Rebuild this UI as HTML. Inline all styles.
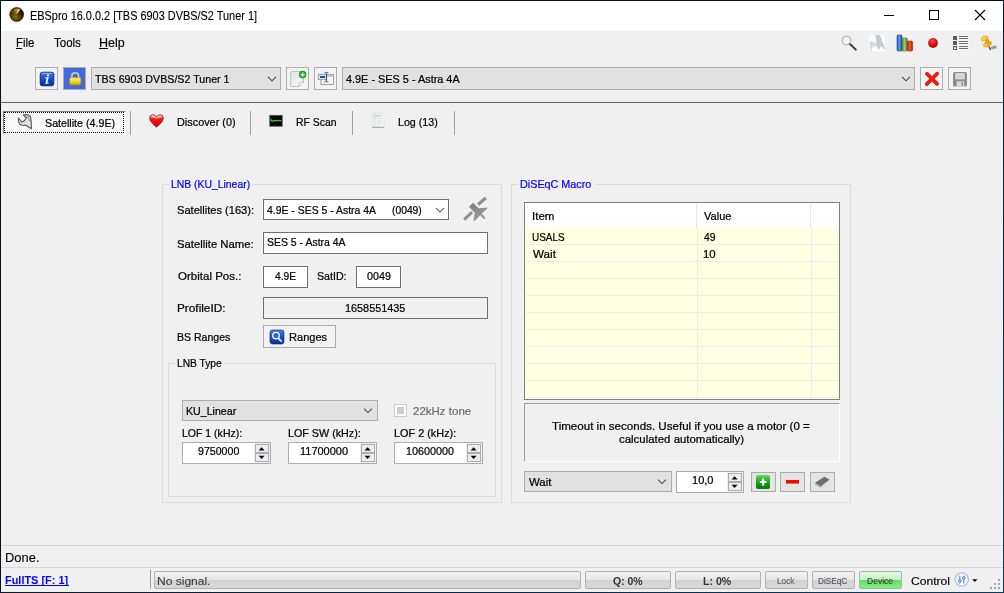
<!DOCTYPE html>
<html><head><meta charset="utf-8"><title>EBSpro</title>
<style>
html,body{margin:0;padding:0}
body{width:1004px;height:593px;overflow:hidden;background:#f0f0f0;position:relative;font-family:"Liberation Sans",sans-serif;font-size:12px;color:#000}
.a{position:absolute;box-sizing:border-box}
.t{position:absolute;white-space:pre;color:#000;transform-origin:0 0;-webkit-text-stroke:0.24px currentColor}
.btn{border:1px solid #adadad;background:#e1e1e1}
.cmb{border:1px solid #adadad;background:#e1e1e1}
.inp{border:1px solid #707070;background:#fff}
.grp{border:1px solid #dcdcdc}
.cap{background:#f0f0f0}
.sep{width:1px;background:#a0a0a0}
.bar{border:1px solid #b2b2b2;border-radius:2px;background:linear-gradient(#f2f2f2 0%,#e6e6e6 48%,#d2d2d2 52%,#d8d8d8 100%)}
.spb{background:#ededed;border:1px solid #adadad}
svg{position:absolute;overflow:visible}
</style></head><body>
<!-- window frame -->
<div class="a" style="left:0;top:0;width:1004px;height:1px;background:#030c1a"></div>
<div class="a" style="left:0;top:0;width:1px;height:593px;background:#04101e"></div>
<div class="a" style="left:1003px;top:0;width:1px;height:593px;background:linear-gradient(#0a1828,#0a4060)"></div>
<div class="a" style="left:0;top:592px;width:1004px;height:1px;background:linear-gradient(90deg,#0c1c2c,#00284e 40%,#064060)"></div>
<div class="a" style="left:1px;top:1px;width:1002px;height:30px;background:#fff"></div>

<!-- caption buttons -->
<svg style="left:880px;top:5px" width="120" height="20" viewBox="0 0 120 20">
<path d="M4 10.5H14" stroke="#000" stroke-width="1" fill="none"/>
<rect x="49.5" y="5.5" width="9" height="9" stroke="#000" stroke-width="1" fill="none"/>
<path d="M95 5L105 15M105 5L95 15" stroke="#000" stroke-width="1.1" fill="none"/>
</svg>
<div class="a" style="left:16px;top:48px;width:6px;height:1px;background:#000"></div>
<div class="a" style="left:99px;top:48px;width:9px;height:1px;background:#000"></div>
<!-- toolbar -->
<div class="a btn" style="left:35px;top:67px;width:23px;height:23px;background:#f3f3f3"></div>
<div class="a btn" style="left:63px;top:67px;width:23px;height:23px;background:#4169e1"></div>
<div class="a cmb" style="left:91px;top:67px;width:190px;height:23px"></div>
<div class="a btn" style="left:286px;top:67px;width:23px;height:23px;background:#f3f3f3"></div>
<div class="a btn" style="left:314px;top:67px;width:23px;height:23px;background:#f3f3f3"></div>
<div class="a cmb" style="left:342px;top:67px;width:573px;height:23px"></div>
<div class="a btn" style="left:920px;top:67px;width:23px;height:23px;background:#f3f3f3"></div>
<div class="a btn" style="left:948px;top:67px;width:23px;height:23px;background:#f3f3f3"></div>
<!-- toolbar bottom line -->
<div class="a" style="left:1px;top:102px;width:1002px;height:1px;background:#646464"></div>
<!-- tabs -->
<div class="a" style="left:3px;top:111px;width:123px;height:23px;background:#f8f8f8;border-top:1px solid #808080;border-left:1px solid #808080;border-right:1px solid #fff;border-bottom:1px solid #fff"></div>
<div class="a" style="left:4px;top:112px;width:120px;height:21px;border:1px dotted #000"></div>
<div class="a sep" style="left:130px;top:111px;height:24px"></div>
<div class="a sep" style="left:250px;top:111px;height:24px"></div>
<div class="a sep" style="left:352px;top:111px;height:24px"></div>
<div class="a sep" style="left:454px;top:111px;height:24px"></div>
<!-- LNB group -->
<div class="a grp" style="left:162px;top:184px;width:340px;height:319px"></div>
<div class="a cap" style="left:169px;top:178px;width:83px;height:14px"></div>
<div class="a inp" style="left:263px;top:199px;width:186px;height:21px"></div>
<div class="a inp" style="left:263px;top:232px;width:225px;height:22px"></div>
<div class="a inp" style="left:263px;top:266px;width:45px;height:22px"></div>
<div class="a inp" style="left:356px;top:266px;width:45px;height:22px"></div>
<div class="a inp" style="left:263px;top:297px;width:225px;height:22px;background:#f0f0f0"></div>
<div class="a btn" style="left:263px;top:325px;width:73px;height:23px;background:#f3f3f3"></div>
<div class="a grp" style="left:168px;top:363px;width:328px;height:134px"></div>
<div class="a cap" style="left:175px;top:357px;width:49px;height:14px"></div>
<div class="a cmb" style="left:182px;top:400px;width:196px;height:21px"></div>
<div class="a" style="left:394px;top:404px;width:13px;height:13px;border:1px solid #cccccc;background:#fff"></div>
<div class="a" style="left:397px;top:407px;width:7px;height:7px;background:#cccccc"></div>
<!-- spins -->
<div class="a inp" style="left:182px;top:442px;width:89px;height:22px;border-color:#abadb3"></div>
<div class="a inp" style="left:288px;top:442px;width:89px;height:22px;border-color:#abadb3"></div>
<div class="a inp" style="left:394px;top:442px;width:89px;height:22px;border-color:#abadb3"></div>
<!-- DiSEqC group -->
<div class="a grp" style="left:511px;top:184px;width:340px;height:319px"></div>
<div class="a cap" style="left:518px;top:178px;width:77px;height:14px"></div>
<!-- listview -->
<div class="a" style="left:524px;top:202px;width:316px;height:198px;background:#ffffe1;border:1px solid #7c818c"></div>
<div class="a" style="left:526px;top:204px;width:312px;height:24px;background:#fff"></div>
<div class="a" style="left:526px;top:244px;width:312px;height:1px;background:#ececf0"></div>
<div class="a" style="left:526px;top:261px;width:312px;height:1px;background:#ececf0"></div>
<div class="a" style="left:526px;top:278px;width:312px;height:1px;background:#ececf0"></div>
<div class="a" style="left:526px;top:295px;width:312px;height:1px;background:#ececf0"></div>
<div class="a" style="left:526px;top:312px;width:312px;height:1px;background:#ececf0"></div>
<div class="a" style="left:526px;top:329px;width:312px;height:1px;background:#ececf0"></div>
<div class="a" style="left:526px;top:346px;width:312px;height:1px;background:#ececf0"></div>
<div class="a" style="left:526px;top:363px;width:312px;height:1px;background:#ececf0"></div>
<div class="a" style="left:526px;top:380px;width:312px;height:1px;background:#ececf0"></div>
<div class="a" style="left:526px;top:397px;width:312px;height:1px;background:#ececf0"></div>
<div class="a" style="left:697px;top:228px;width:1px;height:171px;background:#ececf0"></div>
<div class="a" style="left:811px;top:228px;width:1px;height:171px;background:#ececf0"></div>
<div class="a" style="left:696px;top:204px;width:1px;height:24px;background:#e5e5e5"></div>
<div class="a" style="left:810px;top:204px;width:1px;height:24px;background:#e5e5e5"></div>
<!-- panel -->
<div class="a" style="left:524px;top:403px;width:316px;height:59px;border-top:1px solid #a0a0a0;border-left:1px solid #a0a0a0;border-right:1px solid #fff;border-bottom:1px solid #fff"></div>
<div class="a cmb" style="left:524px;top:471px;width:148px;height:21px"></div>
<div class="a inp" style="left:676px;top:471px;width:68px;height:22px;border-color:#abadb3"></div>
<div class="a btn" style="left:751px;top:472px;width:25px;height:20px;background:#e4e4e4"></div>
<div class="a btn" style="left:780px;top:472px;width:25px;height:20px;background:#e4e4e4"></div>
<div class="a btn" style="left:810px;top:472px;width:25px;height:20px;background:#e4e4e4"></div>
<div class="a" style="left:254px;top:443px;width:16px;height:20px;background:#f0f0f0"></div>
<div class="a" style="left:360px;top:443px;width:16px;height:20px;background:#f0f0f0"></div>
<div class="a" style="left:466px;top:443px;width:16px;height:20px;background:#f0f0f0"></div>
<div class="a" style="left:727px;top:472px;width:16px;height:20px;background:#f0f0f0"></div>
<div class="a spb" style="left:255px;top:444px;width:14px;height:9px"></div>
<div class="a spb" style="left:255px;top:453px;width:14px;height:9px"></div>
<div class="a spb" style="left:361px;top:444px;width:14px;height:9px"></div>
<div class="a spb" style="left:361px;top:453px;width:14px;height:9px"></div>
<div class="a spb" style="left:467px;top:444px;width:14px;height:9px"></div>
<div class="a spb" style="left:467px;top:453px;width:14px;height:9px"></div>
<div class="a spb" style="left:728px;top:473px;width:14px;height:9px"></div>
<div class="a spb" style="left:728px;top:482px;width:14px;height:9px"></div>
<!-- status -->
<div class="a" style="left:5px;top:585px;width:64px;height:1px;background:#0000ff"></div>
<div class="a" style="left:1px;top:545px;width:1002px;height:1px;background:#d7d7d7"></div>
<div class="a" style="left:1px;top:567px;width:1002px;height:1px;background:#d7d7d7"></div>
<div class="a sep" style="left:150px;top:570px;height:19px"></div>
<div class="a bar" style="left:154px;top:571px;width:427px;height:18px"></div>
<div class="a bar" style="left:585px;top:571px;width:86px;height:18px"></div>
<div class="a bar" style="left:675px;top:571px;width:86px;height:18px"></div>
<div class="a bar" style="left:765px;top:571px;width:43px;height:18px"></div>
<div class="a bar" style="left:812px;top:571px;width:43px;height:18px"></div>
<div class="a bar" style="left:859px;top:571px;width:43px;height:18px;background:linear-gradient(#e2fbe2 0%,#c0f4c0 50%,#62dc62 53%,#86ee86 100%);border-color:#aab4aa"></div>
<svg style="left:0;top:0" width="1004" height="593" viewBox="0 0 1004 593">
<defs>
<radialGradient id="gApp" cx="0.45" cy="0.68" r="0.62"><stop offset="0" stop-color="#8c6608"/><stop offset="0.55" stop-color="#624606"/><stop offset="1" stop-color="#221804"/></radialGradient>
<linearGradient id="gBlue" x1="0" y1="0" x2="0" y2="1"><stop offset="0" stop-color="#4080e0"/><stop offset="0.5" stop-color="#1a50c0"/><stop offset="1" stop-color="#0a2c98"/></linearGradient>
<linearGradient id="gGreen" x1="0" y1="0" x2="0" y2="1"><stop offset="0" stop-color="#6ad86a"/><stop offset="0.5" stop-color="#18a418"/><stop offset="1" stop-color="#067806"/></linearGradient>
<linearGradient id="gYel" x1="0" y1="0" x2="0" y2="1"><stop offset="0" stop-color="#fff080"/><stop offset="0.6" stop-color="#f0d020"/><stop offset="1" stop-color="#c8a010"/></linearGradient>
<linearGradient id="gRed" x1="0" y1="0" x2="0" y2="1"><stop offset="0" stop-color="#ff5030"/><stop offset="1" stop-color="#c80808"/></linearGradient>
<radialGradient id="gDot" cx="0.45" cy="0.3" r="0.7"><stop offset="0" stop-color="#f05050"/><stop offset="0.6" stop-color="#d81010"/><stop offset="1" stop-color="#b00808"/></radialGradient>
<linearGradient id="gHeart" x1="0" y1="0" x2="0" y2="1"><stop offset="0" stop-color="#ffb0b0"/><stop offset="0.35" stop-color="#f01818"/><stop offset="1" stop-color="#e00000"/></linearGradient>
<linearGradient id="gBarB" x1="0" y1="0" x2="1" y2="0"><stop offset="0" stop-color="#2a5cc0"/><stop offset="0.5" stop-color="#5a9ae8"/><stop offset="1" stop-color="#1a48a8"/></linearGradient>
<linearGradient id="gBarG" x1="0" y1="0" x2="1" y2="0"><stop offset="0" stop-color="#5a8a28"/><stop offset="0.5" stop-color="#a8cc70"/><stop offset="1" stop-color="#4a7a20"/></linearGradient>
<linearGradient id="gBarR" x1="0" y1="0" x2="1" y2="0"><stop offset="0" stop-color="#c02808"/><stop offset="0.5" stop-color="#f06030"/><stop offset="1" stop-color="#a81800"/></linearGradient>
<linearGradient id="gPage" x1="0" y1="0" x2="1" y2="1"><stop offset="0" stop-color="#e2e2e2"/><stop offset="1" stop-color="#fafafa"/></linearGradient>
<linearGradient id="gSat" x1="0" y1="0" x2="1" y2="1"><stop offset="0" stop-color="#7c7c7c"/><stop offset="1" stop-color="#a4a4a4"/></linearGradient>
<filter id="fBlur" x="-50%" y="-50%" width="200%" height="200%"><feGaussianBlur stdDeviation="0.55"/></filter>
</defs>
<!-- app icon -->
<circle cx="16.7" cy="14.5" r="7.4" fill="#505050" opacity="0.8"/>
<circle cx="16.7" cy="14.5" r="6.5" fill="url(#gApp)"/>
<path d="M16.7 14.5L18.92 20.61A6.5 6.5 0 0 0 23.10 15.63Z" fill="#140e02" opacity="0.2"/>
<path d="M16.7 14.5L23.10 15.63A6.5 6.5 0 0 0 20.52 9.24Z" fill="#140e02" opacity="0.5"/>
<path d="M16.7 14.5L20.52 9.24A6.5 6.5 0 0 0 17.38 8.04Z" fill="#ecd460" opacity="0.95"/>
<path d="M16.7 14.5L17.38 8.04A6.5 6.5 0 0 0 13.65 8.76Z" fill="#c49c2c" opacity="0.8"/>
<path d="M16.7 14.5L13.65 8.76A6.5 6.5 0 0 0 10.59 12.28Z" fill="#8c6c16" opacity="0.5"/>
<circle cx="16.7" cy="14.5" r="6.5" fill="none" stroke="#1c1404" stroke-width="1" opacity="0.75"/>
<!-- top-right small icons -->
<circle cx="846.5" cy="40.5" r="4.3" fill="#f3f3f3" stroke="#b0b0b0" stroke-width="1.1"/>
<path d="M850.2 44.2L855.8 49.6" stroke="#3a3a3a" stroke-width="2" stroke-linecap="round"/>
<rect x="869" y="35" width="16" height="16" fill="#fbfcfd"/>
<path d="M875.5 35L880 35L885 48L885 50L881 46L879 50L877 47Z" fill="#c6cccf"/>
<path d="M869.5 42L872 41L874 43L877 42L877 46L873 47L870 47Z" fill="#d2dce6"/>
<rect x="870.3" y="46" width="1.4" height="5" fill="#c8d8e0"/>
<rect x="897" y="35" width="5" height="16" rx="1" fill="url(#gBarB)" stroke="#1a3c98" stroke-width="0.6"/>
<rect x="902.2" y="38" width="5" height="13" rx="1" fill="url(#gBarG)" stroke="#487818" stroke-width="0.6"/>
<rect x="907.5" y="41" width="5" height="10" rx="1" fill="url(#gBarR)" stroke="#a01800" stroke-width="0.6"/>
<circle cx="933" cy="43" r="4.9" fill="url(#gDot)"/>
<rect x="952.5" y="35.5" width="16" height="15" fill="#f6f6f6"/>
<g fill="#5c5c5c"><rect x="953" y="36" width="4" height="4"/><rect x="953" y="41" width="4" height="4"/><rect x="953" y="46" width="4" height="4"/></g>
<rect x="954.2" y="47.2" width="1.8" height="1.8" fill="#fff"/>
<g fill="#707070"><rect x="959" y="36" width="9" height="1"/><rect x="959" y="38" width="9" height="1"/><rect x="959" y="41" width="9" height="1"/><rect x="959" y="43" width="9" height="1"/><rect x="959" y="46" width="9" height="1"/><rect x="959" y="48" width="9" height="1"/></g>
<!-- pin -->
<ellipse cx="993.8" cy="47.2" rx="3.1" ry="1.5" fill="#7c7c7c" opacity="0.8" filter="url(#fBlur)" transform="rotate(-12 993.8 47.2)"/>
<path d="M989 46.4L990.6 49.9" stroke="#2c2c5c" stroke-width="1.2"/>
<ellipse cx="987.5" cy="44.2" rx="4.7" ry="2.5" fill="#f5a51a" transform="rotate(-24 987.5 44.2)"/>
<path d="M984.6 39.8L988.4 38.2L990 42.4L985.6 44.2Z" fill="#f09a12"/>
<ellipse cx="984.5" cy="38.3" rx="3.9" ry="2.4" fill="#f8b42a" transform="rotate(-24 984.5 38.3)"/>
<ellipse cx="983.6" cy="38.2" rx="2.2" ry="1.2" fill="#ffd45a" transform="rotate(-24 983.6 38.2)"/>
<ellipse cx="985.6" cy="45" rx="2.2" ry="1.2" fill="#fcc440" transform="rotate(-24 985.6 45)"/>
<!-- info button icon -->
<rect x="40.2" y="72.2" width="13.6" height="13.6" rx="2.2" fill="url(#gBlue)" stroke="#001468" stroke-width="0.8"/>
<path d="M41.6 73.3H52.4" stroke="#a8d4f8" stroke-width="0.8" opacity="0.9"/>
<path d="M47.2 74.6h1.9l-0.3 1.6h-1.9zM45.4 77.6l3.4-0.5l-1.5 5.6l1.5-0.2l-0.2 1.1l-3.3 0.5l1.5-5.7l-1.6 0.2z" fill="#fff"/>
<!-- lock icon -->
<path d="M71.9 78V75.6Q71.9 72.8 75.2 72.8Q78.5 72.8 78.5 75.6V78" fill="none" stroke="#8c8c8c" stroke-width="2.2"/>
<path d="M71.9 78V75.6Q71.9 72.8 75.2 72.8Q78.5 72.8 78.5 75.6V78" fill="none" stroke="#dcdcdc" stroke-width="1.1"/>
<rect x="69.6" y="77.6" width="11.2" height="7.4" rx="1.4" fill="url(#gYel)" stroke="#b89010" stroke-width="0.6"/>
<!-- combo chevrons -->
<path d="M268 76.8L272 80.8L276 76.8" fill="none" stroke="#484848" stroke-width="1.05"/>
<path d="M902 76.8L906 80.8L910 76.8" fill="none" stroke="#484848" stroke-width="1.05"/>
<path d="M436 208L440 212L444 208" fill="none" stroke="#484848" stroke-width="1.05"/>
<path d="M364 408.6L368 412.6L372 408.6" fill="none" stroke="#484848" stroke-width="1.05"/>
<path d="M658 479.6L662 483.6L666 479.6" fill="none" stroke="#484848" stroke-width="1.05"/>
<!-- new doc icon -->
<path d="M291.5 71.5H303.5V82L299 86.5H291.5Q290.7 86.5 290.7 85.5V72.5Q290.7 71.5 291.5 71.5Z" fill="url(#gPage)" stroke="#b4b4b4" stroke-width="0.8"/>
<path d="M303.5 82H300Q299 82 299 83V86.5Z" fill="#fdfdfd" stroke="#b4b4b4" stroke-width="0.7"/>
<circle cx="302.6" cy="74.6" r="3.8" fill="#14a814"/>
<path d="M300.4 74.6H304.8M302.6 72.4V76.8" stroke="#fff" stroke-width="1.4"/>
<!-- rename icon -->
<rect x="321" y="74.5" width="12.5" height="10" fill="#f4f4f4" stroke="#9a9a9a" stroke-width="0.9"/>
<rect x="321.4" y="74.9" width="11.7" height="2" fill="#c0c4d0"/>
<rect x="318.3" y="74.3" width="8.4" height="5.4" fill="#e8e8e8" stroke="#8c8c8c" stroke-width="0.8"/>
<rect x="320" y="76" width="5" height="2" fill="#1848c8"/>
<path d="M324.4 72.4Q326 72.4 326.4 73Q326.8 72.4 328.4 72.4M326.4 73V81.4M324.4 82Q326 82 326.4 81.4Q326.8 82 328.4 82" fill="none" stroke="#444" stroke-width="0.9"/>
<!-- red X -->
<path d="M927 73.8L937 83.8M937.2 73.6L926.8 84" stroke="url(#gRed)" stroke-width="3.6" stroke-linecap="round"/>
<path d="M927 73.8L937 83.8M937.2 73.6L926.8 84" stroke="#e81c10" stroke-width="3.4" stroke-linecap="round"/>
<!-- floppy -->
<rect x="953" y="72" width="14" height="14.6" rx="1.6" fill="#8c8c8c"/>
<rect x="955.2" y="73" width="9.6" height="6.4" fill="#d4d4d4"/>
<rect x="956.6" y="81.4" width="7.6" height="5.2" fill="#dcdcdc"/>
<rect x="961.4" y="82.4" width="1.6" height="3.2" fill="#8c8c8c"/>
<!-- tab: dish icon -->
<path d="M18.4 118.2L22 122.2Q24.8 121.4 26.4 117.8L23.2 115Q28 113.6 30.4 116.6L31.2 121.4L31.4 128.8L25.8 125.2Q21 126.2 19.4 123.6Q18 121 18.4 118.2Z" fill="#e2e2e2" stroke="#5c5c5c" stroke-width="1.2" stroke-linejoin="round"/>
<path d="M26.4 117.8L28.2 116.8L29.6 121L31 122" fill="none" stroke="#3c3c3c" stroke-width="0.9" stroke-dasharray="1 1"/>
<!-- heart -->
<path d="M156.5 127.2Q149.6 121.8 149.6 118.2Q149.6 114.6 152.9 114.6Q155.2 114.6 156.5 116.8Q157.8 114.6 160.1 114.6Q163.4 114.6 163.4 118.2Q163.4 121.8 156.5 127.2Z" fill="url(#gHeart)" stroke="#602020" stroke-width="0.6"/>
<path d="M151 117.6Q151.2 115.6 153 115.6Q155.4 115.8 156.5 118Q157.6 115.8 160 115.6Q161.8 115.6 162 117.6Q159 116.6 156.5 119Q154 116.6 151 117.6Z" fill="#ffc8c8" opacity="0.85"/>
<!-- rf scan icon -->
<rect x="269.8" y="115.4" width="12.4" height="10.8" fill="#000" stroke="#505050" stroke-width="0.9"/>
<path d="M271 118.8V120.6L272.4 121.4L273.2 120.6H277.6L278.4 120.2L279.4 120.6H281.4" fill="none" stroke="#20d820" stroke-width="1.15"/>
<!-- log icon -->
<path d="M372.4 113.4H381.8L384 115.8V127H372.4Z" fill="#f4f5f6" stroke="#dcdcdc" stroke-width="0.7"/>
<rect x="372" y="126.8" width="12.2" height="1.1" fill="#a8a8a8"/>
<rect x="373.8" y="115" width="7.2" height="1.6" fill="#b4d4e4"/>
<path d="M373.6 116.8H376.2V126H373.6Z" fill="#e2e4e6"/>
<g fill="#dcdee0"><rect x="376.8" y="118.2" width="5.4" height="0.9"/><rect x="376.8" y="120.2" width="4.4" height="0.9"/><rect x="376.8" y="122.2" width="5.4" height="0.9"/><rect x="376.8" y="124.2" width="4" height="0.9"/></g>
<!-- satellite icon (LNB group) -->
<path d="M463.1 218.5L471 211L473.1 213.2L465.2 220.8Z" fill="url(#gSat)"/>
<path d="M477 203.4L484.6 196.8L487 199L479.3 205.8Z" fill="url(#gSat)"/>
<path d="M469.4 206.8L472.9 203.3L478.8 208.8L487.2 208.1L481.3 213.7L485.1 217.9L484 218.6L480.2 214.8L474.6 220.7L473.9 220.3L475.3 213Z" fill="url(#gSat)" stroke="#8e8e8e" stroke-width="0.9" stroke-linejoin="round"/>
<!-- Ranges icon -->
<rect x="270" y="330" width="14" height="14" rx="2.4" fill="url(#gBlue)" stroke="#04207a" stroke-width="0.6"/>
<circle cx="276" cy="335.6" r="3.3" fill="#2a60d8" stroke="#fff" stroke-width="1.3"/>
<path d="M278.6 338.4L281.2 341.2" stroke="#fff" stroke-width="1.6" stroke-linecap="round"/>
<!-- spin arrows -->
<g fill="#000">
<path d="M258.6 450.4L261.6 447.2L264.6 450.4Z"/><path d="M258.6 455.8L261.6 459L264.6 455.8Z"/>
<path d="M364.6 450.4L367.6 447.2L370.6 450.4Z"/><path d="M364.6 455.8L367.6 459L370.6 455.8Z"/>
<path d="M470.6 450.4L473.6 447.2L476.6 450.4Z"/><path d="M470.6 455.8L473.6 459L476.6 455.8Z"/>
<path d="M731.6 479.4L734.6 476.2L737.6 479.4Z"/><path d="M731.6 484.8L734.6 488L737.6 484.8Z"/>
</g>
<!-- plus / minus / chip -->
<rect x="756" y="475" width="14" height="14" rx="2" fill="url(#gGreen)"/>
<path d="M759.8 482H766.4M763.1 478.6V485.4" stroke="#fff" stroke-width="2.2"/>
<rect x="786" y="480" width="13" height="3.6" fill="#e81000"/>
<path d="M815 482.8L824.4 476.8L829.6 479.6L820.8 486.4Z" fill="#6e6e6e"/>
<path d="M815 483.4L820.6 486.6L820.6 487.6L815 484.6Z" fill="#9a9a9a"/>
<path d="M820.6 486.6L829.4 479.4L829.4 480.6L820.6 487.6Z" fill="#b8b8b8"/>
<g fill="#d8d8d8"><rect x="822.2" y="485.6" width="1" height="1.6"/><rect x="824.4" y="483.8" width="1" height="1.6"/><rect x="826.6" y="482" width="1" height="1.6"/></g>
<!-- control icon -->
<circle cx="961.8" cy="579.5" r="6.6" fill="#f8fbff" stroke="#a8c8f0" stroke-width="1.4"/>
<path d="M959.8 575.6V583.6M963.8 575.6V583.6" stroke="#3868b8" stroke-width="0.9"/>
<circle cx="959.8" cy="581" r="1.3" fill="#f8fbff" stroke="#3868b8" stroke-width="0.9"/>
<circle cx="963.8" cy="578" r="1.3" fill="#f8fbff" stroke="#3868b8" stroke-width="0.9"/>
<path d="M972.2 579.2H977.4L974.8 582Z" fill="#000"/>
<g fill="#a4a4a4"><rect x="998" y="579" width="2" height="2"/><rect x="994" y="583" width="2" height="2"/><rect x="998" y="583" width="2" height="2"/><rect x="990" y="587" width="2" height="2"/><rect x="994" y="587" width="2" height="2"/><rect x="998" y="587" width="2" height="2"/></g>
</svg>

<span class="t" style="left:29.91px;top:8.9px;font-size:11.9px;line-height:15.9px;transform:scaleX(0.9182);color:#000;-webkit-text-stroke:0.12px">EBSpro 16.0.0.2 [TBS 6903 DVBS/S2 Tuner 1]</span>
<span class="t" style="left:16.20px;top:34.7px;font-size:12.2px;line-height:16.2px;transform:scaleX(0.9420);-webkit-text-stroke:0.15px">File</span>
<span class="t" style="left:53.84px;top:34.7px;font-size:12.2px;line-height:16.2px;transform:scaleX(0.9443);-webkit-text-stroke:0.15px">Tools</span>
<span class="t" style="left:98.74px;top:34.7px;font-size:12.2px;line-height:16.2px;transform:scaleX(1.0264);-webkit-text-stroke:0.15px">Help</span>
<span class="t" style="left:95.25px;top:71.2px;font-size:11.6px;line-height:15.6px;transform:scaleX(0.9194);">TBS 6903 DVBS/S2 Tuner 1</span>
<span class="t" style="left:346.17px;top:71.2px;font-size:11.6px;line-height:15.6px;transform:scaleX(0.9383);">4.9E - SES 5 - Astra 4A</span>
<span class="t" style="left:44.80px;top:115.2px;font-size:11.6px;line-height:15.6px;transform:scaleX(0.9216);">Satellite (4.9E)</span>
<span class="t" style="left:176.56px;top:114.2px;font-size:11.6px;line-height:15.6px;transform:scaleX(0.9374);">Discover (0)</span>
<span class="t" style="left:296.07px;top:114.2px;font-size:11.6px;line-height:15.6px;transform:scaleX(0.8966);">RF Scan</span>
<span class="t" style="left:398.25px;top:114.2px;font-size:11.6px;line-height:15.6px;transform:scaleX(0.9189);">Log (13)</span>
<span class="t" style="left:170.57px;top:176.2px;font-size:11.6px;line-height:15.6px;transform:scaleX(0.8959);color:#0000ff">LNB (KU_Linear)</span>
<span class="t" style="left:177.04px;top:202.2px;font-size:11.6px;line-height:15.6px;transform:scaleX(0.9566);">Satellites (163):</span>
<span class="t" style="left:266.57px;top:201.8px;font-size:11.6px;line-height:15.6px;transform:scaleX(0.8997);">4.9E - SES 5 - Astra 4A</span>
<span class="t" style="left:391.52px;top:201.8px;font-size:11.6px;line-height:15.6px;transform:scaleX(0.8888);">(0049)</span>
<span class="t" style="left:177.05px;top:236.2px;font-size:11.6px;line-height:15.6px;transform:scaleX(0.9754);">Satellite Name:</span>
<span class="t" style="left:266.50px;top:233.8px;font-size:11.6px;line-height:15.6px;transform:scaleX(0.9036);">SES 5 - Astra 4A</span>
<span class="t" style="left:177.61px;top:268.2px;font-size:11.6px;line-height:15.6px;transform:scaleX(0.9945);">Orbital Pos.:</span>
<span class="t" style="left:275.37px;top:268.2px;font-size:11.6px;line-height:15.6px;transform:scaleX(0.8833);">4.9E</span>
<span class="t" style="left:316.60px;top:268.2px;font-size:11.6px;line-height:15.6px;transform:scaleX(0.9157);">SatID:</span>
<span class="t" style="left:366.72px;top:268.2px;font-size:11.6px;line-height:15.6px;transform:scaleX(0.9242);">0049</span>
<span class="t" style="left:176.81px;top:300.2px;font-size:11.6px;line-height:15.6px;transform:scaleX(1.0174);">ProfileID:</span>
<span class="t" style="left:345.18px;top:300.2px;font-size:11.6px;line-height:15.6px;transform:scaleX(0.9365);">1658551435</span>
<span class="t" style="left:176.85px;top:329.2px;font-size:11.6px;line-height:15.6px;transform:scaleX(0.9094);">BS Ranges</span>
<span class="t" style="left:289.14px;top:329.2px;font-size:11.6px;line-height:15.6px;transform:scaleX(0.9538);">Ranges</span>
<span class="t" style="left:176.89px;top:355.2px;font-size:11.6px;line-height:15.6px;transform:scaleX(0.8797);">LNB Type</span>
<span class="t" style="left:185.97px;top:403.2px;font-size:11.6px;line-height:15.6px;transform:scaleX(0.9169);">KU_Linear</span>
<span class="t" style="left:413.21px;top:403.2px;font-size:11.6px;line-height:15.6px;transform:scaleX(0.9924);color:#6d6d6d">22kHz tone</span>
<span class="t" style="left:181.85px;top:425.2px;font-size:11.6px;line-height:15.6px;transform:scaleX(0.9065);">LOF 1 (kHz):</span>
<span class="t" style="left:287.95px;top:425.2px;font-size:11.6px;line-height:15.6px;transform:scaleX(0.9263);">LOF SW (kHz):</span>
<span class="t" style="left:393.55px;top:425.2px;font-size:11.6px;line-height:15.6px;transform:scaleX(0.9383);">LOF 2 (kHz):</span>
<span class="t" style="left:197.61px;top:443.2px;font-size:11.6px;line-height:15.6px;transform:scaleX(0.9151);">9750000</span>
<span class="t" style="left:300.18px;top:443.2px;font-size:11.6px;line-height:15.6px;transform:scaleX(0.9471);">11700000</span>
<span class="t" style="left:406.29px;top:443.2px;font-size:11.6px;line-height:15.6px;transform:scaleX(0.9291);">10600000</span>
<span class="t" style="left:520.35px;top:176.2px;font-size:11.6px;line-height:15.6px;transform:scaleX(0.9303);color:#0000ff">DiSEqC Macro</span>
<span class="t" style="left:531.76px;top:208.2px;font-size:11.6px;line-height:15.6px;transform:scaleX(0.9934);">Item</span>
<span class="t" style="left:703.70px;top:208.2px;font-size:11.6px;line-height:15.6px;transform:scaleX(0.9542);">Value</span>
<span class="t" style="left:531.93px;top:229.2px;font-size:11.6px;line-height:15.6px;transform:scaleX(0.8579);">USALS</span>
<span class="t" style="left:703.67px;top:229.2px;font-size:11.6px;line-height:15.6px;transform:scaleX(0.8938);">49</span>
<span class="t" style="left:532.70px;top:246.2px;font-size:11.6px;line-height:15.6px;transform:scaleX(1.0046);">Wait</span>
<span class="t" style="left:702.88px;top:246.2px;font-size:11.6px;line-height:15.6px;transform:scaleX(0.9821);">10</span>
<span class="t" style="left:551.85px;top:418.2px;font-size:11.6px;line-height:15.6px;transform:scaleX(0.9984);">Timeout in seconds. Useful if you use a motor (0 =</span>
<span class="t" style="left:618.81px;top:431.2px;font-size:11.6px;line-height:15.6px;transform:scaleX(0.9856);">calculated automatically)</span>
<span class="t" style="left:528.90px;top:474.2px;font-size:11.6px;line-height:15.6px;transform:scaleX(0.9868);">Wait</span>
<span class="t" style="left:691.59px;top:472.2px;font-size:11.6px;line-height:15.6px;transform:scaleX(0.9521);">10,0</span>
<span class="t" style="left:4.91px;top:550.4px;font-size:12.5px;line-height:16.5px;transform:scaleX(1.0344);-webkit-text-stroke:0.1px">Done.</span>
<span class="t" style="left:5.37px;top:572.2px;font-size:11.6px;line-height:15.6px;transform:scaleX(0.9423);font-weight:bold;color:#0000ff;-webkit-text-stroke:0">FullTS [F: 1]</span>
<span class="t" style="left:157.45px;top:572.8px;font-size:11.6px;line-height:15.6px;transform:scaleX(1.0370);color:#3a3a3a;-webkit-text-stroke:0.1px">No signal.</span>
<span class="t" style="left:612.50px;top:573.2px;font-size:11.6px;line-height:15.6px;transform:scaleX(0.9030);font-weight:bold;color:#333;-webkit-text-stroke:0">Q: 0%</span>
<span class="t" style="left:703.09px;top:573.2px;font-size:11.6px;line-height:15.6px;transform:scaleX(0.9138);font-weight:bold;color:#333;-webkit-text-stroke:0">L: 0%</span>
<span class="t" style="left:776.90px;top:573.8px;font-size:9.7px;line-height:13.7px;transform:scaleX(0.8552);color:#5a5a60;-webkit-text-stroke:0.1px">Lock</span>
<span class="t" style="left:817.99px;top:573.8px;font-size:9.7px;line-height:13.7px;transform:scaleX(0.8459);color:#505058;-webkit-text-stroke:0.1px">DiSEqC</span>
<span class="t" style="left:867.27px;top:573.8px;font-size:9.7px;line-height:13.7px;transform:scaleX(0.8802);color:#3c3c40;-webkit-text-stroke:0.1px">Device</span>
<span class="t" style="left:911.12px;top:573.2px;font-size:11.6px;line-height:15.6px;transform:scaleX(1.0431);-webkit-text-stroke:0.15px">Control</span>
</body></html>
